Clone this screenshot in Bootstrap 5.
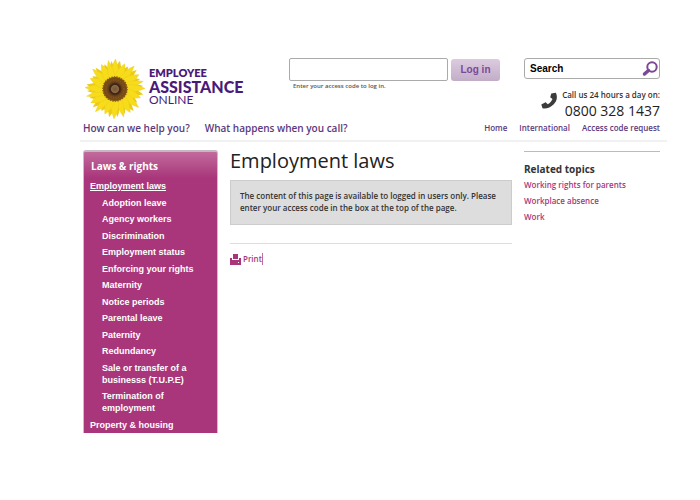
<!DOCTYPE html>
<html lang="en">
<head>
<meta charset="utf-8">
<meta name="viewport" content="width=device-width, initial-scale=1">
<title>Employment laws - Employee Assistance Online</title>
<link href="https://cdn.jsdelivr.net/npm/bootstrap@5.3.0/dist/css/bootstrap.min.css" rel="stylesheet">
<style>
body { font-family: "Open Sans", sans-serif; font-size: 8px; line-height: 12px; color: #333; background: #fff; font-weight: 600; }
a { text-decoration: none; }
.page { padding: 58px 33px 24px 80px; }
.site-head { padding: 0 7px 4px 3px; border-bottom: 2px solid #f1f1f1; }
.brand { color: #4a1a78; font-family: Lato, sans-serif; gap: 4px; }
.brand-text { padding-top: 8px; line-height: 14px; }
.brand-1 { font-size: 11px; font-weight: 800; }
.brand-2 { font-size: 16px; font-weight: 900; }
.brand-3 { font-size: 12px; font-weight: 400; line-height: 12px; }
.login { width: 211px; margin-right: 24px; }
.login-row { gap: 3px; }
.code-box { height: 23px; border: 1px solid #aaa; border-radius: 2px; font-size: 11px; padding: 0 6px; }
.btn-login { height: 22px; width: 49px; flex: none; padding: 0; border: 0; border-radius: 3px; font: bold 10px/22px "Liberation Sans", sans-serif; color: #7b4896; background: linear-gradient(#dccbe0, #c2adc8); }
.btn-login:hover { color: #5d2f78; background: #c2adc8; }
.hint { font-size: 6px; line-height: 8px; padding: 1px 4px 0; color: #555; }
.side { width: 136px; flex: none; }
.search { height: 21px; border: 1px solid #aaa; border-radius: 3px; padding: 0 0 0 5px; }
.search input { min-width: 0; width: 100%; border: 0; padding: 0; outline: 0; font: bold 10px/18px "Liberation Sans", sans-serif; color: #000; background: transparent; }
.search input::placeholder { color: #000; opacity: 1; }
.search button { border: 0; background: none; padding: 0; line-height: 0; }
.call { margin-top: 10px; gap: 4px; }
.call svg { margin-top: 3px; }
.call-number { font-size: 14px; line-height: 20px; font-weight: 500; color: #222; }
.nav-row { margin-top: -1px; }
.nav-main { font-size: 10px; line-height: 16px; gap: 15px; }
.nav-main a, .nav-small a { color: #5b3a7d; }
.nav-small { gap: 12px; }
.columns { gap: 12px; padding: 8px 7px 0 3px; }
.menu { width: 135px; flex: none; border: 1px solid #c9bfc6; border-top: 2px solid #c5b9c1; border-bottom: 0; border-radius: 3px 3px 0 0; background: linear-gradient(#c26a9e, #a9367a 26px); padding: 6px 6px 2px; color: #fff; }
.menu h2 { font-size: 10px; line-height: 16px; font-weight: 700; margin: 0 1px 6px; }
.menu ul { font: bold 9px/12px "Liberation Sans", sans-serif; min-height: 251px; }
.menu a { color: #fff; display: block; }
.sub { padding-left: 12px; }
.content { min-width: 0; }
.content h1 { font-size: 20px; line-height: 22px; font-weight: 500; color: #222; margin: 0 0 8px; }
.notice { background: #ddd; border: 1px solid #ccc; padding: 9px 9px 10px; }
.print { margin-top: 18px; border-top: 1px solid #ddd; padding-top: 9px; }
.print a { color: #a9367a; gap: 2px; border-right: 1px solid #c26a9e; }
.related { border-top: 1px solid #bbb; padding-top: 9px; margin-top: 1px; }
.related h2 { font-size: 10px; line-height: 16px; font-weight: 700; margin: 0; color: #333; }
.related li { line-height: 16px; }
.related a { color: #a9367a; }
</style>
<script src="https://cdn.jsdelivr.net/npm/bootstrap@5.3.0/dist/js/bootstrap.bundle.min.js"></script>
</head>
<body>
<div class="page">
  <header class="site-head">
    <div class="d-flex align-items-start">
      <a href="#" class="brand d-flex flex-grow-1">
        <svg width="62" height="62" viewBox="-32 -31 62 62" aria-hidden="true">
          <defs>
            <path id="pt" d="M-3 -8C-5 -17 -3.500 -23 0.500 -30C3 -23 5 -17 3 -8Z"/>
            <g id="q"><use href="#pt"/><use href="#pt" transform="rotate(20) scale(1.100 .9)"/><use href="#pt" transform="rotate(39) scale(.9 1)"/><use href="#pt" transform="rotate(58) scale(1.100 .93)"/><use href="#pt" transform="rotate(74) scale(.8 .98)"/></g>
            <radialGradient id="disc"><stop offset="0" stop-color="#74543a"/><stop offset=".3" stop-color="#8a6a42"/><stop offset=".42" stop-color="#4b2c17"/><stop offset=".65" stop-color="#744719"/><stop offset="1" stop-color="#7a5012"/></radialGradient>
          </defs>
          <circle r="18" fill="#e6bd14"/>
          <g fill="#eccb18" transform="rotate(9) scale(.96)"><use href="#q"/><use href="#q" transform="rotate(91)"/><use href="#q" transform="rotate(182)"/><use href="#q" transform="rotate(269)"/></g>
          <g fill="#f7dc1c" stroke="#e8c415" stroke-width=".3"><use href="#q"/><use href="#q" transform="rotate(88)"/><use href="#q" transform="rotate(181)"/><use href="#q" transform="rotate(272)"/></g>
          <circle r="12" fill="url(#disc)" stroke="#8b5c12" stroke-width="1.500" stroke-dasharray="1.500 1"/>
          <circle r="9" fill="none" stroke="#926126" stroke-width="1" stroke-dasharray="1 1.500"/>
          <circle r="5" fill="none" stroke="#3f2416" stroke-width="1.500"/>
        </svg>
        <span class="brand-text d-flex flex-column">
          <span class="brand-1">EMPLOYEE</span>
          <span class="brand-2">ASSISTANCE</span>
          <span class="brand-3">ONLINE</span>
        </span>
      </a>
      <form class="login">
        <div class="login-row d-flex align-items-center">
          <input class="code-box w-100" type="text" id="code" aria-describedby="hint" aria-label="Access code">
          <button class="btn btn-login" type="button">Log in</button>
        </div>
        <label class="hint d-block" id="hint" for="code">Enter your access code to log in.</label>
      </form>
      <div class="side">
        <form class="search d-flex align-items-center" role="search">
          <input type="text" placeholder="Search" aria-label="Search">
          <button type="button" aria-label="Go">
            <svg width="17" height="17" viewBox="0 0 17 17" fill="none" stroke="#7b4896"><circle cx="10" cy="7" r="4.700" stroke-width="2"/><path d="M6.500 10.500L2.500 14" stroke-width="3.500" stroke-linecap="round"/></svg>
          </button>
        </form>
        <div class="call d-flex justify-content-end">
          <svg width="17" height="17" viewBox="0 0 17 17" fill="#3c3c3c" aria-hidden="true"><path d="M10.300 1.600L14.800 .8C16.600 4 16.300 8.800 12.800 12.200C9.500 15.600 5 17 1.500 16.200L.3 12.400L4.600 10.200L6.800 12.200C9 11 10.600 9.300 11.500 7L9.200 5.300Z"/></svg>
          <div class="text-end">
            <div>Call us 24 hours a day on:</div>
            <div class="call-number">0800 328 1437</div>
          </div>
        </div>
      </div>
    </div>
    <div class="nav-row d-flex justify-content-between align-items-center">
      <nav class="nav-main d-flex" aria-label="Main"><a href="#">How can we help you?</a><a href="#">What happens when you call?</a></nav>
      <nav class="nav-small d-flex" aria-label="Secondary"><a href="#">Home</a><a href="#">International</a><a href="#">Access code request</a></nav>
    </div>
  </header>
  <div class="columns d-flex align-items-start">
    <nav class="menu" aria-label="Section">
      <h2>Laws &amp; rights</h2>
      <ul class="list-unstyled mb-0 d-flex flex-column justify-content-between">
        <li><a href="#" class="text-decoration-underline">Employment laws</a></li>
        <li class="sub"><a href="#">Adoption leave</a></li>
        <li class="sub"><a href="#">Agency workers</a></li>
        <li class="sub"><a href="#">Discrimination</a></li>
        <li class="sub"><a href="#">Employment status</a></li>
        <li class="sub"><a href="#">Enforcing your rights</a></li>
        <li class="sub"><a href="#">Maternity</a></li>
        <li class="sub"><a href="#">Notice periods</a></li>
        <li class="sub"><a href="#">Parental leave</a></li>
        <li class="sub"><a href="#">Paternity</a></li>
        <li class="sub"><a href="#">Redundancy</a></li>
        <li class="sub"><a href="#">Sale or transfer of a<br>businesss (T.U.P.E)</a></li>
        <li class="sub"><a href="#">Termination of<br>employment</a></li>
        <li><a href="#">Property &amp; housing</a></li>
      </ul>
    </nav>
    <main class="content flex-grow-1">
      <h1>Employment laws</h1>
      <div class="notice">The content of this page is available to logged in users only. Please enter your access code in the box at the top of the page.</div>
      <div class="print d-flex">
        <a href="#" class="d-flex align-items-center">
          <svg width="11" height="11" viewBox="0 0 11 11" fill="#a9367a" aria-hidden="true"><path d="M3 0H8V5H3ZM0 4H2V6H9V4H11V11H0Z"/><path d="M8 8H9V9H8Z" fill="#fff"/></svg>
          Print</a>
      </div>
    </main>
    <aside class="side related">
      <h2>Related topics</h2>
      <ul class="list-unstyled mb-0">
        <li><a href="#">Working rights for parents</a></li>
        <li><a href="#">Workplace absence</a></li>
        <li><a href="#">Work</a></li>
      </ul>
    </aside>
  </div>
</div>
</body>
</html>
